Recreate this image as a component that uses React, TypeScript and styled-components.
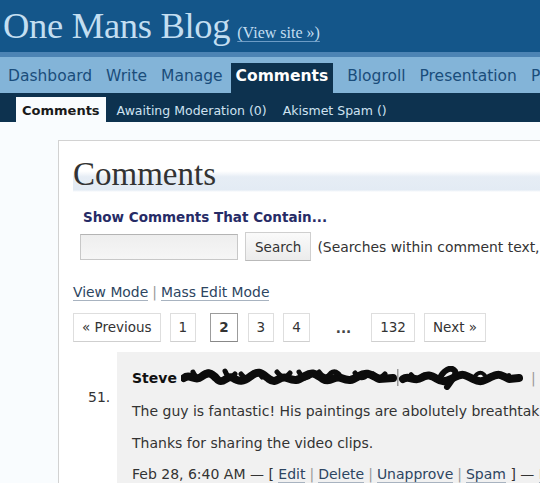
import React from "react";
import styled, { createGlobalStyle } from "styled-components";

const Global = createGlobalStyle`
  html, body { margin: 0; padding: 0; background: #f9fcfe; overflow: hidden; }
  body {
    width: 540px; height: 483px;
    font-family: "DejaVu Sans", Verdana, sans-serif;
    color: #333;
  }
  #root { width: 540px; height: 483px; overflow: hidden; }
`;

const Header = styled.header`
  box-sizing: border-box;
  height: 52px;
  background: #14568a;
  padding: 5px 0 0 3px;
  display: flex;
  align-items: baseline;
  white-space: nowrap;
  line-height: 42px;
`;

const Title = styled.h1`
  margin: 0;
  font-family: "Liberation Serif", "Times New Roman", serif;
  font-weight: normal;
  font-size: 36.5px;
  color: #c3def1;
  letter-spacing: -0.3px;
`;

const ViewSite = styled.a`
  margin-left: 7px;
  font-family: "Liberation Serif", "Times New Roman", serif;
  font-size: 16px;
  color: #c3def1;
  text-decoration: underline;
  text-decoration-color: #6c9cc6;
  text-underline-offset: 3px;
`;

const Nav = styled.nav`
  box-sizing: border-box;
  height: 41px;
  background: #83b4d8;
  border-top: 5px solid #4d84b4;
  padding: 6px 0 0 2px;
  display: flex;
  white-space: nowrap;
  overflow: hidden;
`;

const NavItem = styled.a<{ $active?: boolean }>`
  flex: none;
  height: 30px;
  line-height: 27px;
  padding: 0 ${(p) => (p.$active ? 5 : 6)}px;
  margin-right: ${(p) => (p.$active ? 8 : 2)}px;
  font-size: 15.5px;
  font-weight: ${(p) => (p.$active ? "bold" : "normal")};
  color: ${(p) => (p.$active ? "#ffffff" : "#1a4d7b")};
  background: ${(p) => (p.$active ? "#0d324f" : "transparent")};
`;

const SubNav = styled.nav`
  height: 29px;
  background: #0d324f;
  padding-left: 16px;
  display: flex;
  white-space: nowrap;
`;

const SubItem = styled.a<{ $active?: boolean }>`
  flex: none;
  margin-top: 4px;
  height: 29px;
  line-height: 28px;
  padding: 0 ${(p) => (p.$active ? 6 : 7)}px;
  margin-right: ${(p) => (p.$active ? 4 : 2)}px;
  font-size: ${(p) => (p.$active ? 13 : 12.5)}px;
  font-weight: ${(p) => (p.$active ? "bold" : "normal")};
  color: ${(p) => (p.$active ? "#1a1a1a" : "#cfe2f1")};
  background: ${(p) => (p.$active ? "#f9fcfe" : "transparent")};
  position: relative;
  z-index: 1;
`;

const Wrap = styled.main`
  margin: 18px 0 0 58px;
  border-top: 1px solid #d2d2d2;
  border-left: 1px solid #d2d2d2;
  background: #ffffff;
  padding: 15px 0 40px 14px;
  white-space: nowrap;
`;

const PageTitle = styled.h2`
  margin: 0;
  height: 36px;
  line-height: 36px;
  font-family: "Liberation Serif", "Times New Roman", serif;
  font-weight: normal;
  font-size: 33px;
  color: #333;
  background: linear-gradient(
    to bottom,
    rgba(226, 235, 244, 0) 0%,
    rgba(226, 235, 244, 0) 42%,
    #e6edf5 58%,
    #e3ebf4 94%,
    rgba(226, 235, 244, 0) 100%
  );
`;

const SearchHeading = styled.div`
  margin: 16px 0 0 10px;
  line-height: 18px;
  font-size: 13.5px;
  font-weight: bold;
  color: #262b66;
`;

const SearchRow = styled.form`
  margin: 6px 0 0 7px;
  display: flex;
  align-items: center;
`;

const SearchInput = styled.input`
  box-sizing: border-box;
  width: 158px;
  height: 26px;
  border: 1px solid #c8c8c8;
  border-top-color: #b4b4b4;
  background: linear-gradient(#eeeeee, #f6f6f6);
  margin: 0;
`;

const SearchButton = styled.button`
  box-sizing: border-box;
  margin: 0 0 0 7px;
  height: 29px;
  padding: 0 9px;
  border: 1px solid #cfcfcf;
  border-bottom-color: #b9b9b9;
  background: linear-gradient(#fafafa, #ececec);
  font-family: "DejaVu Sans", Verdana, sans-serif;
  font-size: 13.5px;
  color: #333;
`;

const Hint = styled.span`
  margin-left: 6px;
  font-size: 13.9px;
  color: #333;
`;

const ModeRow = styled.div`
  margin-top: 22px;
  font-size: 13.9px;
  line-height: 18px;
  color: #999;
`;

const Link = styled.a`
  color: #2d4561;
  text-decoration: none;
  border-bottom: 1px solid #a8b3c0;
`;

const Sep = styled.span`
  color: #9a9a9a;
  margin: 0 4px;
`;

const Pager = styled.div`
  margin-top: 12px;
  display: flex;
  align-items: center;
  height: 29px;
`;

const PageBox = styled.a<{ $current?: boolean }>`
  box-sizing: border-box;
  height: 29px;
  line-height: 27px;
  padding: 0 8px;
  margin-right: ${(p) => (p.$current ? 10 : 9)}px;
  margin-left: ${(p) => (p.$current ? 5 : 0)}px;
  border: 1px solid ${(p) => (p.$current ? "#9c9c9c" : "#dedede")};
  border-bottom-color: ${(p) => (p.$current ? "#888" : "#cfcfcf")};
  background: #ffffff;
  font-size: 13.5px;
  font-weight: ${(p) => (p.$current ? "bold" : "normal")};
  color: #333;
`;

const Dots = styled.span`
  font-size: 13.5px;
  font-weight: bold;
  color: #444;
  padding: 0 20px 0 17px;
`;

const CommentRow = styled.div`
  margin-top: 10px;
  display: flex;
`;

const Num = styled.div`
  flex: none;
  width: 44px;
  padding: 37px 0 0 15px;
  box-sizing: border-box;
  font-size: 14px;
  color: #333;
`;

const CommentBox = styled.div`
  flex: 1;
  background: #f1f1f1;
  padding: 16px 0 10px 15px;
  font-size: 14px;
  color: #333;
`;

const Author = styled.p`
  margin: 0;
  display: flex;
  align-items: center;
  height: 20px;
`;

const Strong = styled.strong`
  font-size: 14px;
  color: #111;
`;

const Para = styled.p`
  margin: 14px 0 0 0;
  line-height: 18px;
`;

const Meta = styled.p`
  margin: 13px 0 0 0;
  line-height: 18px;
`;

const Scribble = () => (
  <svg width="346" height="24" viewBox="0 0 346 24" style={{ marginLeft: 4, flex: "none" }}>
    <g fill="none" stroke="#0c0c0c" strokeLinecap="round" strokeLinejoin="round">
      <path
        strokeWidth="8"
        d="M3 12 C 9 7, 14 16, 20 11 S 30 6, 36 13 S 46 8, 52 12 S 62 16, 70 10 S 80 7, 88 13 S 98 9, 106 12 S 116 15, 124 10 S 134 8, 142 13 S 152 9, 160 12 S 170 15, 178 10 S 190 9, 198 13 L 212 12"
      />
      <path
        strokeWidth="5"
        d="M12 6 q 5 10 11 2 q 6 -6 10 4 M44 5 q 4 10 10 3 M60 8 q 6 8 12 0 q 4 -5 9 3 M96 6 q 7 9 13 1 M118 6 q 5 10 12 3 M138 6 q 6 9 12 1 q 5 -4 10 4 M174 7 q 6 9 13 1 M192 8 q 6 7 12 0"
      />
      <path
        strokeWidth="8"
        d="M222 13 C 228 9, 234 16, 240 12 S 250 9, 256 13 S 266 15, 274 11 S 284 9, 292 13 S 302 15, 310 11 S 320 9, 328 13 L 338 12"
      />
      <path strokeWidth="6" d="M258 14 C 262 4, 270 0, 274 5 C 276 10, 268 18, 266 21" />
      <path strokeWidth="4" d="M230 8 q 6 8 12 1 M284 8 q 6 8 12 0 q 5 -4 10 4 M316 7 q 6 8 12 2" />
    </g>
    <rect x="216" y="3" width="1.5" height="17" fill="#9a9a9a" />
  </svg>
);

const navItems = ["Dashboard", "Write", "Manage", "Comments", "Blogroll", "Presentation", "Plugins", "Users", "Options"];

export default function App() {
  return (
    <>
      <Global />
      <Header>
        <Title>One Mans Blog</Title>
        <ViewSite>(View site »)</ViewSite>
      </Header>
      <Nav>
        {navItems.map((n) => (
          <NavItem key={n} $active={n === "Comments"}>
            {n}
          </NavItem>
        ))}
      </Nav>
      <SubNav>
        <SubItem $active>Comments</SubItem>
        <SubItem>Awaiting Moderation (0)</SubItem>
        <SubItem>Akismet Spam ()</SubItem>
      </SubNav>
      <Wrap>
        <PageTitle>Comments</PageTitle>
        <SearchHeading>Show Comments That Contain...</SearchHeading>
        <SearchRow onSubmit={(e) => e.preventDefault()}>
          <SearchInput type="text" />
          <SearchButton type="button">Search</SearchButton>
          <Hint>(Searches within comment text, e-mail, URL, and IP address.)</Hint>
        </SearchRow>
        <ModeRow>
          <Link>View Mode</Link>
          <Sep>|</Sep>
          <Link>Mass Edit Mode</Link>
        </ModeRow>
        <Pager>
          <PageBox>« Previous</PageBox>
          <PageBox>1</PageBox>
          <PageBox $current>2</PageBox>
          <PageBox>3</PageBox>
          <PageBox>4</PageBox>
          <Dots>...</Dots>
          <PageBox>132</PageBox>
          <PageBox>Next »</PageBox>
        </Pager>
        <CommentRow>
          <Num>51.</Num>
          <CommentBox>
            <Author>
              <Strong>Steve</Strong>
              <Scribble />
              <Sep>|</Sep>
            </Author>
            <Para>The guy is fantastic! His paintings are abolutely breathtaking.</Para>
            <Para>Thanks for sharing the video clips.</Para>
            <Meta>
              Feb 28, 6:40 AM — [ <Link>Edit</Link>
              <Sep>|</Sep>
              <Link>Delete</Link>
              <Sep>|</Sep>
              <Link>Unapprove</Link>
              <Sep>|</Sep>
              <Link>Spam</Link> ] — <Link>Edit Post</Link>
            </Meta>
          </CommentBox>
        </CommentRow>
      </Wrap>
    </>
  );
}
